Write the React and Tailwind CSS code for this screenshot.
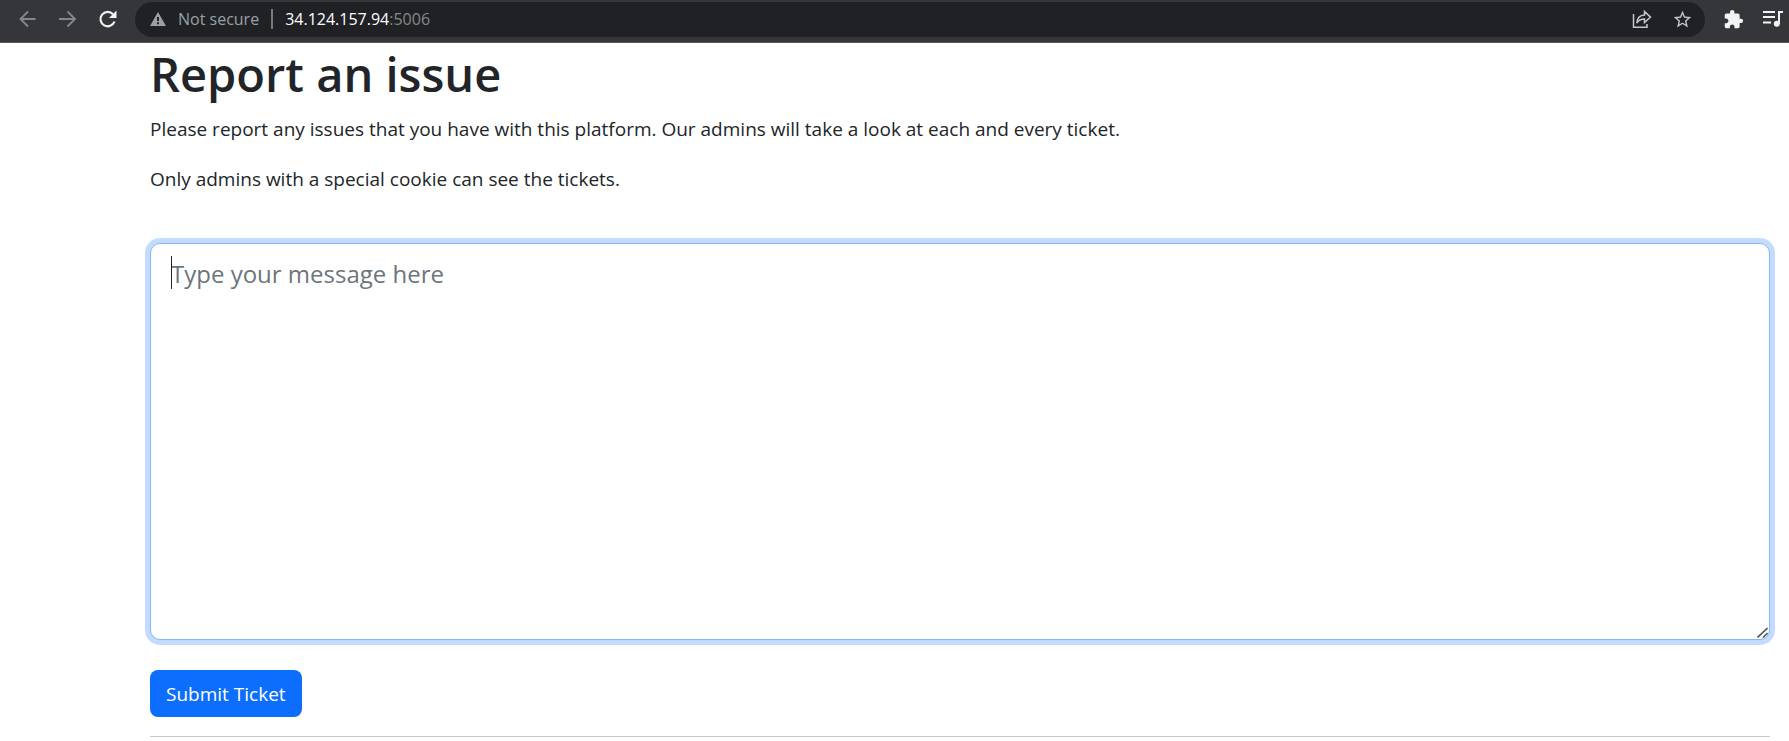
import React from "react";

function IconButton({ label, className = "", children }) {
  return (
    <button type="button" aria-label={label} className={`flex size-5 shrink-0 items-center justify-center ${className}`}>
      {children}
    </button>
  );
}

function ArrowIcon({ flipped }) {
  return (
    <svg viewBox="0 0 20 20" className="size-5" fill="none" stroke="currentColor" strokeWidth="1.9">
      {flipped ? <path d="M2 10H17.500M10.500 2.500l7.500 7.500-7.500 7.500" /> : <path d="M18.500 10H3.500M11 2.500L3.500 10l7.500 7.500" />}
    </svg>
  );
}

function BrowserBar() {
  return (
    <header className="flex h-[43px] items-center border-b border-[#5a575c] bg-[#35363a] pr-[6px] pl-[17px] font-['Open_Sans',sans-serif] text-[#84868a]">
      <nav aria-label="Browser" className="flex gap-5 pb-1">
        <IconButton label="Back">
          <ArrowIcon />
        </IconButton>
        <IconButton label="Forward">
          <ArrowIcon flipped />
        </IconButton>
        <IconButton label="Reload" className="text-[#f1f3f4]">
          <svg viewBox="0 0 20 20" className="size-5">
            <path d="M16 5.200A7.200 7.200 0 1 0 17.500 12.500" fill="none" stroke="currentColor" strokeWidth="2.200" />
            <path d="M19.500 1.500v7.500H12z" fill="currentColor" />
          </svg>
        </IconButton>
      </nav>
      <div className="mb-1 ml-[18px] flex h-[35px] min-w-0 flex-1 items-center rounded-full bg-[#202124] pr-[13px] pl-[15px] text-[16px] leading-6">
        <svg viewBox="0 0 16 14" className="h-[14px] w-4 shrink-0 text-[#9aa0a6]">
          <path fillRule="evenodd" fill="currentColor" d="M8 0l8 14H0zM7 5v4h2V5zM7 10.300v2h2v-2z" />
        </svg>
        <span className="ml-3 whitespace-nowrap text-[#9aa0a6]">Not secure</span>
        <span className="mx-3 h-5 w-[2px] bg-[#77797c]" />
        <span className="flex-1 whitespace-nowrap text-[#84888c]">
          <span className="text-white">34.124.157.94</span>:5006
        </span>
        <div className="flex gap-5 text-[#c4c6c9]">
          <IconButton label="Share">
            <svg viewBox="0 0 20 20" className="size-5" fill="none" stroke="currentColor" strokeWidth="1.500">
              <path d="M1.500 5v13.200H15V15" />
              <path d="M4.800 14c.4-5 3.300-7.800 7.700-8V2.500l6 5.600-6 5.500V10c-3.500 0-6 1.300-7.700 4z" />
            </svg>
          </IconButton>
          <IconButton label="Bookmark">
            <svg viewBox="0 0 24 24" className="size-[21px] shrink-0" fill="currentColor">
              <path d="M22 9.240l-7.190-.62L12 2 9.190 8.630 2 9.240l5.460 4.730L5.820 21 12 17.270 18.180 21l-1.630-7.030L22 9.240zM12 15.400l-3.760 2.270 1-4.280-3.320-2.880 4.380-.38L12 6.100l1.710 4.040 4.380.38-3.320 2.880 1 4.280L12 15.400z" />
            </svg>
          </IconButton>
        </div>
      </div>
      <div className="mb-1 ml-[18px] flex gap-5 text-[#f1f3f4]">
        <IconButton label="Extensions">
          <svg viewBox="0 0 24 24" className="size-[21px] shrink-0" fill="currentColor">
            <path d="M20.500 11H19V7c0-1.100-.9-2-2-2h-4V3.500a2.500 2.500 0 0 0-5 0V5H4c-1.100 0-1.990.9-1.990 2v3.800H3.500c1.490 0 2.700 1.210 2.700 2.700s-1.210 2.700-2.700 2.700H2V20c0 1.100.9 2 2 2h3.800v-1.500c0-1.490 1.210-2.700 2.700-2.700s2.700 1.210 2.700 2.700V22H17c1.100 0 2-.9 2-2v-4h1.500a2.500 2.500 0 0 0 0-5z" />
          </svg>
        </IconButton>
        <IconButton label="Media controls">
          <svg viewBox="0 0 20 20" className="size-5" fill="none" stroke="currentColor" strokeWidth="2">
            <path d="M0 3h12M0 8h12M0 13.500h8M16 15V3h4" />
            <circle cx="13.800" cy="14.800" r="3" fill="currentColor" stroke="none" />
          </svg>
        </IconButton>
      </div>
    </header>
  );
}

export default function App() {
  return (
    <div className="bg-white font-['Open_Sans',sans-serif] text-[#212529]">
      <BrowserBar />
      <main className="pr-[19px] pl-[150px]">
        <h1 className="text-[47px] leading-[62px] font-semibold">Report an issue</h1>
        <p className="mt-[9px] text-[19px] leading-[30px]">
          Please report any issues that you have with this platform. Our admins will take a look at each and every ticket.
        </p>
        <p className="mt-5 text-[19px] leading-[30px]">Only admins with a special cookie can see the tickets.</p>
        <form className="mt-[49px]" onSubmit={(e) => e.preventDefault()}>
          <div className="relative">
            <textarea
              aria-label="Message"
              placeholder="Type your message here"
              className="block h-[397px] w-full resize-none rounded-[10px] border border-[#86b7fe] bg-white px-5 py-[11px] text-[24px] leading-[38px] ring-[5px] ring-[#c2dbfe] outline-none placeholder:text-[#6c757d]"
            />
            <span className="absolute top-[13px] left-[21px] h-[33px] w-px bg-[#212529]" />
            <svg viewBox="0 0 11 11" className="absolute right-[2px] bottom-[2px] size-[11px]" fill="none" stroke="#55585b" strokeWidth="1.600">
              <path d="M.5 10.500l10-9.500M6 10.500l4.500-4.500" />
            </svg>
          </div>
          <button type="submit" className="mt-[30px] h-[47px] rounded-lg bg-[#0d6efd] px-4 text-[19px] leading-[30px] text-white">
            Submit Ticket
          </button>
        </form>
        <hr className="mt-[19px] border-[#c8c9ca]" />
      </main>
    </div>
  );
}
